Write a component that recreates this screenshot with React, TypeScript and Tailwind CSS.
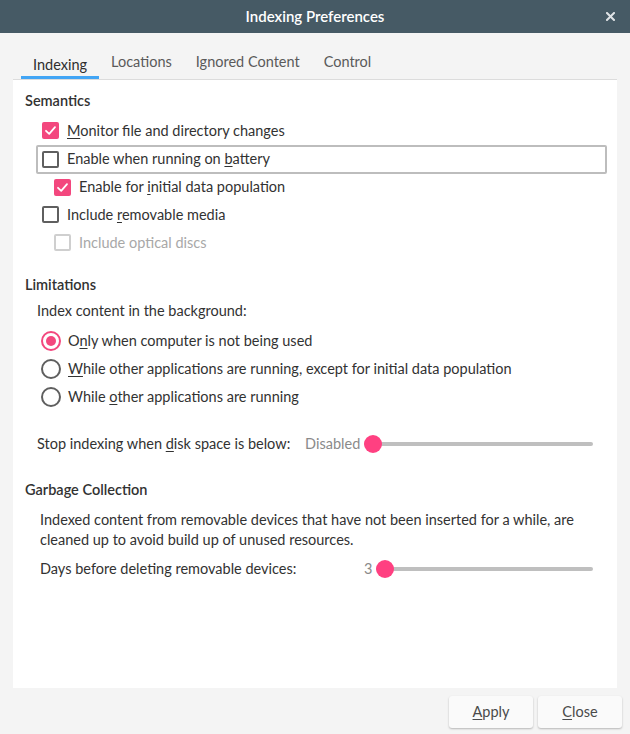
import React from "react";

function Check({ checked, disabled }: { checked?: boolean; disabled?: boolean }) {
  if (checked) {
    return (
      <span className="flex h-[17px] w-[17px] shrink-0 items-center justify-center rounded-[2px] bg-[#f3477e]">
        <svg width="13" height="13" viewBox="0 0 13 13">
          <path d="M2 6.8 L5.2 9.8 L11 3.2" fill="none" stroke="#fff" strokeWidth="1.8" strokeLinecap="round" strokeLinejoin="round" />
        </svg>
      </span>
    );
  }
  return (
    <span
      className={
        disabled
          ? "block h-[17px] w-[17px] shrink-0 rounded-[2px] border-2 border-[#cfcfcf]"
          : "block h-[17px] w-[17px] shrink-0 rounded-[2px] border-2 border-[#5f5f5f]"
      }
    />
  );
}

function Radio({ checked }: { checked?: boolean }) {
  return checked ? (
    <span className="flex h-[20px] w-[20px] shrink-0 items-center justify-center rounded-full border-2 border-[#f3477e]">
      <span className="block h-[10px] w-[10px] rounded-full bg-[#f3477e]" />
    </span>
  ) : (
    <span className="block h-[20px] w-[20px] shrink-0 rounded-full border-2 border-[#5f5f5f]" />
  );
}

function Slider({ label, labelW }: { label: string; labelW: string }) {
  return (
    <div className="flex flex-1 items-center">
      <span className={`text-right text-[#8a8a8a] ${labelW}`}>{label}</span>
      <div className="relative ml-[4px] flex h-[20px] flex-1 items-center">
        <div className="h-[4px] w-full rounded-full bg-[#bfbfbf]" />
        <div className="absolute left-0 top-[1px] h-[18px] w-[18px] rounded-full bg-[#ff4081]" />
      </div>
    </div>
  );
}

export default function App() {
  return (
    <div
      className="flex h-[734px] w-[630px] flex-col bg-[#f4f4f4] text-[14.5px] text-[#323232]"
      style={{ fontFamily: "Lato, 'Noto Sans', sans-serif" }}
    >
      <div className="relative flex h-[33px] shrink-0 items-center justify-center bg-[#465a65]">
        <span className="text-[15px] font-semibold text-white">Indexing Preferences</span>
        <svg className="absolute right-[15px] top-[12px]" width="9" height="9" viewBox="0 0 9 9">
          <path d="M1 1 L8 8 M8 1 L1 8" stroke="#dfe3e6" strokeWidth="2" strokeLinecap="square" />
        </svg>
      </div>

      <div className="flex h-[46px] items-end pl-[21px]">
        <div className="flex h-[33px] flex-col justify-between">
          <span className="px-[12px] pt-[8px] text-[#2e2e2e]">Indexing</span>
          <span className="block h-[3px] w-full bg-[#42a5f5]" />
        </div>
        <span className="px-[12px] pb-[6px] text-[#5a5a5a]">Locations</span>
        <span className="px-[12px] pb-[6px] text-[#5a5a5a]">Ignored Content</span>
        <span className="px-[12px] pb-[6px] text-[#5a5a5a]">Control</span>
      </div>

      <div className="mx-[13px] flex h-[609px] flex-col border-t border-[#dcdcdc] bg-white">
        <div className="ml-[12px] mt-[10px] font-semibold">Semantics</div>

        <div className="mt-[5px] flex flex-col">
          <div className="flex h-[28px] items-center gap-[8px] pl-[29px]">
            <Check checked />
            <span><u className="underline-offset-2">M</u>onitor file and directory changes</span>
          </div>
          <div className="ml-[23px] mr-[10px] flex h-[29px] items-center gap-[8px] rounded-[2px] border-2 border-[#bdbdbd] pl-[4px]">
            <Check />
            <span>Enable when running on <u className="underline-offset-2">b</u>attery</span>
          </div>
          <div className="flex h-[27px] items-center gap-[8px] pl-[41px]">
            <Check checked />
            <span>Enable for <u className="underline-offset-2">i</u>nitial data population</span>
          </div>
          <div className="flex h-[28px] items-center gap-[8px] pl-[29px]">
            <Check />
            <span>Include <u className="underline-offset-2">r</u>emovable media</span>
          </div>
          <div className="flex h-[28px] items-center gap-[8px] pl-[41px]">
            <Check disabled />
            <span className="text-[#a8a8a8]">Include optical discs</span>
          </div>
        </div>

        <div className="ml-[12px] mt-[17px] font-semibold">Limitations</div>
        <div className="ml-[24px] mt-[4px]">Index content in the background:</div>
        <div className="mt-[6px] flex flex-col">
          <div className="flex h-[28px] items-center gap-[7px] pl-[28px]">
            <Radio checked />
            <span>O<u className="underline-offset-2">n</u>ly when computer is not being used</span>
          </div>
          <div className="flex h-[28px] items-center gap-[7px] pl-[28px]">
            <Radio />
            <span><u className="underline-offset-2">W</u>hile other applications are running, except for initial data population</span>
          </div>
          <div className="flex h-[28px] items-center gap-[7px] pl-[28px]">
            <Radio />
            <span>While <u className="underline-offset-2">o</u>ther applications are running</span>
          </div>
        </div>

        <div className="ml-[24px] mr-[24px] mt-[22px] flex items-center">
          <span className="mr-[14px]">Stop indexing when <u className="underline-offset-2">d</u>isk space is below:</span>
          <Slider label="Disabled" labelW="w-[56px]" />
        </div>

        <div className="ml-[12px] mt-[24px] font-semibold">Garbage Collection</div>
        <div className="ml-[27px] mr-[24px] mt-[9px] leading-[20px]">
          Indexed content from removable devices that have not been inserted for a while, are cleaned up to avoid build up of unused resources.
        </div>
        <div className="ml-[27px] mr-[24px] mt-[8px] flex items-center">
          <span className="mr-[52px]">Days before deleting removable devices:</span>
          <Slider label="3" labelW="w-[24px]" />
        </div>
      </div>

      <div className="flex justify-end gap-[5px] pr-[8px] pt-[8px]">
        <button className="h-[32px] w-[84px] rounded-[3px] bg-[#fafafa] text-[#4a4a4a] shadow-[0_1px_2px_rgba(0,0,0,0.25)]">
          <u className="underline-offset-2">A</u>pply
        </button>
        <button className="h-[32px] w-[84px] rounded-[3px] bg-[#fafafa] text-[#4a4a4a] shadow-[0_1px_2px_rgba(0,0,0,0.25)]">
          <u className="underline-offset-2">C</u>lose
        </button>
      </div>
    </div>
  );
}
